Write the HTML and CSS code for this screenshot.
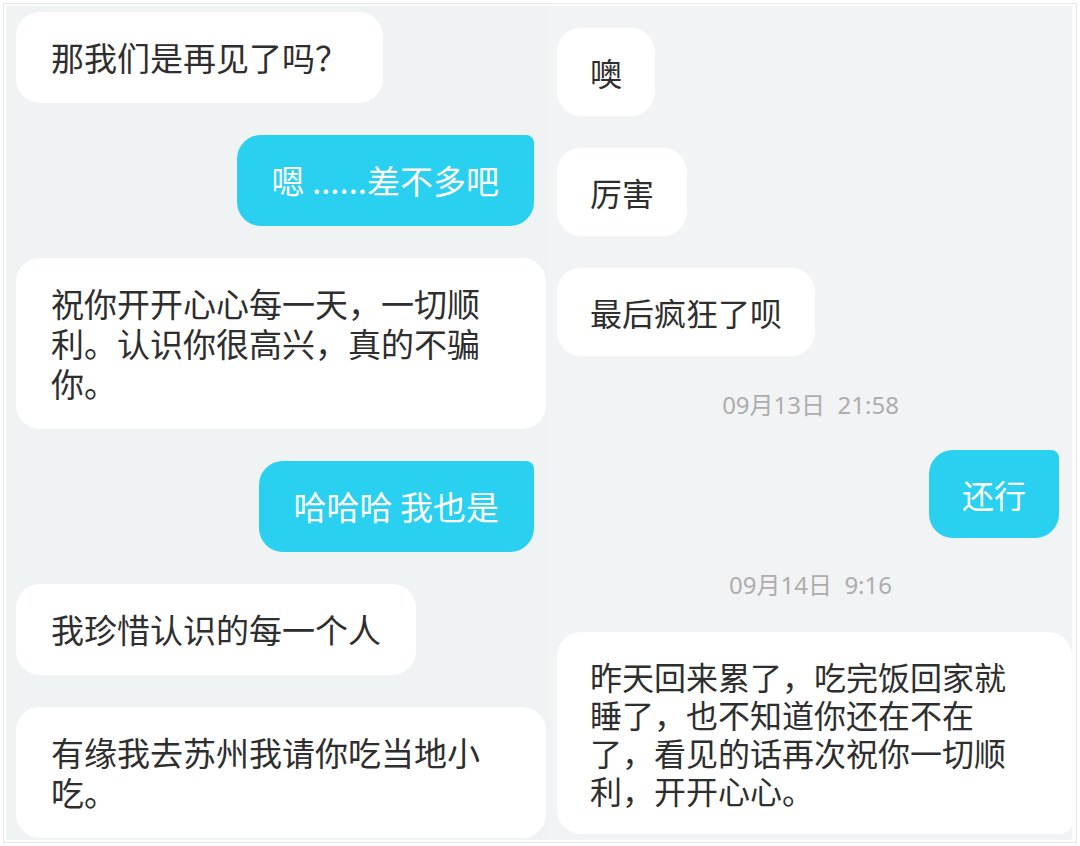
FILE: index.html
```html
<!DOCTYPE html>
<html lang="zh-CN">
<head>
<meta charset="utf-8">
<title>聊天记录</title>
<link rel="stylesheet" href="styles.css">
</head>
<body>
<div class="frame">
  <div class="panel panel-left">
    <div class="msg msg-in">那我们是再见了吗？</div>
    <div class="msg msg-out">嗯 ......差不多吧</div>
    <div class="msg msg-in msg-wide">祝你开开心心每一天，一切顺<br>利。认识你很高兴，真的不骗<br>你。</div>
    <div class="msg msg-out msg-out-2">哈哈哈 我也是</div>
    <div class="msg msg-in">我珍惜认识的每一个人</div>
    <div class="msg msg-in msg-wide">有缘我去苏州我请你吃当地小<br>吃。</div>
  </div>
  <div class="panel panel-right">
    <div class="msg msg-in">噢</div>
    <div class="msg msg-in">厉害</div>
    <div class="msg msg-in">最后疯狂了呗</div>
    <div class="time time-1">09月13日&nbsp;&nbsp;21:58</div>
    <div class="msg msg-out">还行</div>
    <div class="time">09月14日&nbsp;&nbsp;9:16</div>
    <div class="msg msg-in msg-wide">昨天回来累了，吃完饭回家就<br>睡了，也不知道你还在不在<br>了，看见的话再次祝你一切顺<br>利，开开心心。</div>
  </div>
</div>
</body>
</html>
```

FILE: styles.css
```css
* {
  box-sizing: border-box;
}

html, body {
  margin: 0;
  padding: 0;
  background: #ffffff;
}

body {
  width: 1080px;
  height: 846px;
  overflow: hidden;
  font-family: "Noto Sans CJK SC", "Noto Sans", sans-serif;
}

.frame {
  margin: 3px;
  width: 1074px;
  height: 840px;
  border: 1px solid #e4e6e7;
  padding: 2px;
  display: grid;
  grid-template-columns: 543px 523px;
  overflow: hidden;
}

.panel {
  display: flex;
  flex-direction: column;
  align-items: flex-start;
  gap: 32px;
  overflow: hidden;
}

.panel-left {
  background: #eff3f4;
  padding: 6px 0 0 10px;
}

.panel-right {
  background: #f2f3f5;
  padding: 22px 0 0 8px;
}

.msg {
  background: #ffffff;
  color: #2e2e2e;
  border-radius: 24px;
  white-space: nowrap;
}

.panel-left .msg {
  font-size: 33px;
  line-height: 40px;
  padding: 25px 35px 26px;
}

.panel-right .msg {
  font-size: 32px;
  line-height: 38px;
  padding: 25px 33px;
}

.msg-wide.msg {
  width: 530px;
}

.panel-right .msg-wide.msg {
  width: 515px;
  border-radius: 24px 24px 12px 24px;
}

.msg-out {
  align-self: flex-end;
  background: #29d0ef;
  color: #ffffff;
  border-radius: 24px 8px 24px 24px;
}

.panel-left .msg-out {
  margin-right: 15px;
}

.panel-right .msg-out {
  margin-right: 13px;
}

.time {
  align-self: stretch;
  text-align: center;
  color: #adadad;
  font-family: "Noto Sans", "Noto Sans CJK SC", sans-serif;
  font-size: 24px;
  line-height: 30px;
  height: 30px;
  margin-right: 8px;
}

.time-1 {
  margin-top: 2px;
  margin-bottom: -2px;
}
```
